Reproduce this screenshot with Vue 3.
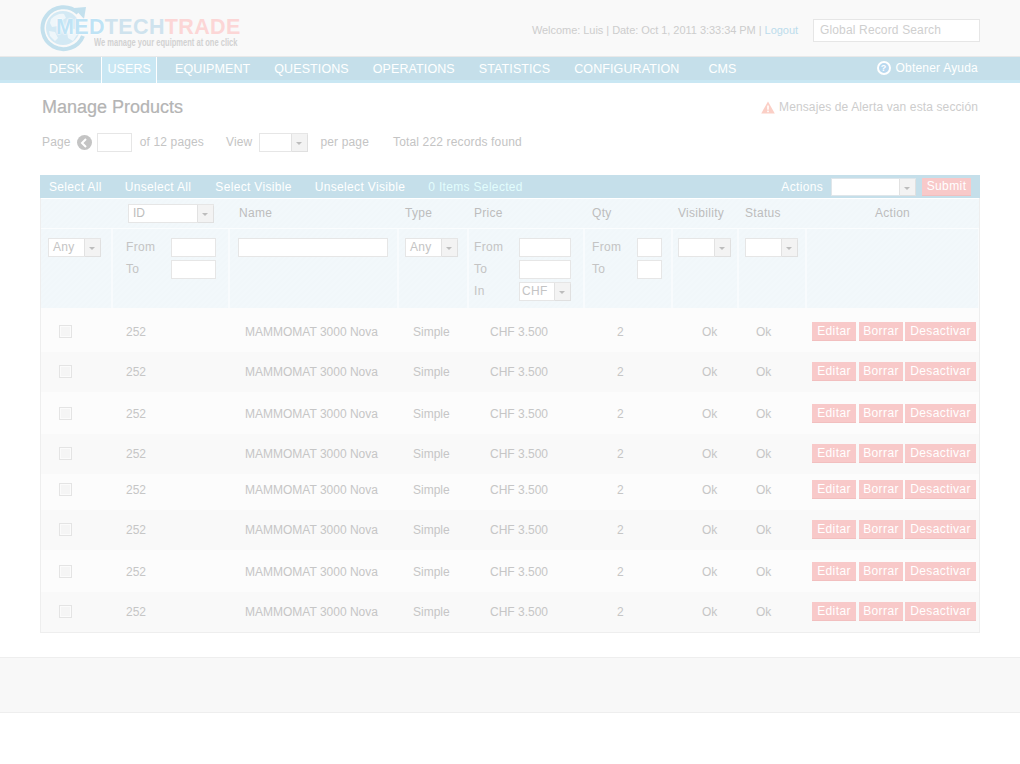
<script setup>
const navItems = ["DESK", "USERS", "EQUIPMENT", "QUESTIONS", "OPERATIONS", "STATISTICS", "CONFIGURATION", "CMS"];
// row heights differ in the original table
const rows = [
  { height: 44, top: 4, bottom: 0 },
  { height: 40, top: 0, bottom: 0 },
  { height: 42, top: 2, bottom: 0 },
  { height: 40, top: 0, bottom: 0 },
  { height: 36, top: 0, bottom: 4 },
  { height: 40, top: 0, bottom: 0 },
  { height: 42, top: 2, bottom: 0 },
  { height: 40, top: 0, bottom: 0 },
];
</script>

<template>
  <div class="page">
    <header class="top">
      <div class="logo">
        <svg class="globe" width="52" height="50" viewBox="0 0 52 50">
          <circle cx="25" cy="25" r="17" fill="#d3e9f4" />
          <path d="M13 16c4-4 9-6 13-5l2 4-5 3-3 5-6 1-2-4zM28 25l9 1 3 4-5 8-5-3-1-6zM11 28l6 1 3 6-3 3-5-5z" fill="#eef6fa" />
          <path d="M40 10A21 21 0 1 0 45 33" fill="none" stroke="#c3e0ed" stroke-width="4" />
          <path d="M36 5l12-1-2 12z" fill="#c3e0ed" />
        </svg>
        <div class="logo-name"><span class="med">MED</span><span class="tech">TECH</span><span class="trade">TRADE</span></div>
        <div class="logo-tag">We manage your equipment at one click</div>
      </div>
      <div class="user-info">Welcome: Luis | Date: Oct 1, 2011 3:33:34 PM | <a>Logout</a></div>
      <input class="global-search" placeholder="Global Record Search" />
    </header>

    <nav class="nav">
      <a v-for="item in navItems" :key="item" :class="{ active: item === 'USERS' }">{{ item }}</a>
      <div class="help">
        <span class="help-icon">?</span>
        Obtener Ayuda
      </div>
    </nav>

    <main class="content">
      <div class="title-row">
        <h1>Manage Products</h1>
        <div class="alert">
          <svg width="14" height="13" viewBox="0 0 14 13">
            <path d="M7 .5 13.800 12.500H.2z" fill="#fbcfc6" />
            <rect x="6.200" y="4.500" width="1.600" height="4.200" fill="#fff" />
            <rect x="6.200" y="9.600" width="1.600" height="1.600" fill="#fff" />
          </svg>
          Mensajes de Alerta van esta sección
        </div>
      </div>

      <div class="pager">
        <span class="label">Page</span>
        <span class="prev">
          <svg width="8" height="10" viewBox="0 0 8 10"><path d="M6 1 2 5l4 4" fill="none" stroke="#fff" stroke-width="2" /></svg>
        </span>
        <span class="box page-box"></span>
        <span class="label of">of 12 pages</span>
        <span class="label view">View</span>
        <span class="select view-select"><i></i></span>
        <span class="label per">per page</span>
        <span class="label total">Total 222 records found</span>
      </div>

      <section class="table">
        <div class="toolbar">
          <a>Select All</a>
          <a class="t2">Unselect All</a>
          <a class="t3">Select Visible</a>
          <a class="t4">Unselect Visible</a>
          <span class="selected">0 Items Selected</span>
          <span class="actions-label">Actions</span>
          <span class="select actions-select"><i></i></span>
          <button class="btn submit">Submit</button>
        </div>

        <div class="grid head">
          <div></div>
          <div class="id-cell"><span class="select id-select">ID<i></i></span></div>
          <div>Name</div>
          <div>Type</div>
          <div>Price</div>
          <div>Qty</div>
          <div>Visibility</div>
          <div>Status</div>
          <div class="center">Action</div>
        </div>

        <div class="grid filters">
          <div><span class="select any">Any<i></i></span></div>
          <div class="pairs pairs-id">
            <label>From</label><span class="box"></span>
            <label>To</label><span class="box"></span>
          </div>
          <div class="name-filter"><span class="box"></span></div>
          <div><span class="select any">Any<i></i></span></div>
          <div class="pairs pairs-price">
            <label>From</label><span class="box"></span>
            <label>To</label><span class="box"></span>
            <label>In</label><span class="select chf">CHF<i></i></span>
          </div>
          <div class="pairs pairs-qty">
            <label>From</label><span class="box"></span>
            <label>To</label><span class="box"></span>
          </div>
          <div><span class="select any"><i></i></span></div>
          <div><span class="select any"><i></i></span></div>
          <div></div>
        </div>

        <div
          v-for="(row, i) in rows"
          :key="i"
          class="grid row"
          :style="{ height: row.height + 'px', paddingTop: row.top + 'px', paddingBottom: row.bottom + 'px' }"
        >
          <div class="check-cell"><span class="check"></span></div>
          <div>252</div>
          <div class="product">MAMMOMAT 3000 Nova</div>
          <div class="simple">Simple</div>
          <div class="price">CHF 3.500</div>
          <div class="qty">2</div>
          <div class="ok1">Ok</div>
          <div class="ok2">Ok</div>
          <div class="row-actions">
            <button class="btn editar">Editar</button>
            <button class="btn borrar">Borrar</button>
            <button class="btn desactivar">Desactivar</button>
          </div>
        </div>
      </section>
    </main>

    <footer class="footer"></footer>
  </div>
</template>

<style scoped>
.page {
  width: 1020px;
  font-family: "Liberation Sans", Arial, sans-serif;
  font-size: 12px;
  color: #c4c4c4;
  background: #fff;
}

.top {
  height: 57px;
  box-sizing: border-box;
  background: #f9f9f9;
  border-bottom: 1px solid #e9e9e9;
  display: flex;
  align-items: center;
  padding-right: 40px;
}

.logo {
  position: relative;
  width: 240px;
  height: 56px;
  flex: none;
}

.globe {
  position: absolute;
  left: 38px;
  top: 3px;
}

.logo-name {
  position: absolute;
  left: 56px;
  top: 17px;
  font-size: 21.500px;
  line-height: 20px;
  font-weight: bold;
  letter-spacing: 0.35px;
  white-space: nowrap;
}

.med {
  color: #bfe3f5;
  text-shadow: 0 0 2px #fff, 0 0 2px #fff;
}
.tech { color: #cfe3ee; }
.trade { color: #fcd6d6; }

.logo-tag {
  position: absolute;
  left: 94px;
  top: 37px;
  font-size: 11px;
  line-height: 10px;
  font-weight: bold;
  color: #d2d2d2;
  white-space: nowrap;
  transform: scaleX(0.685);
  transform-origin: left center;
}

.user-info {
  margin-left: auto;
  margin-right: 15px;
  color: #cdcdcd;
  font-size: 11px;
  letter-spacing: -0.04px;
  margin-top: 4px;
}

.user-info a {
  color: #bcdcec;
}

.global-search {
  width: 167px;
  height: 23px;
  margin-top: 4px;
  box-sizing: border-box;
  border: 1px solid #e6e6e6;
  background: #fff;
  padding: 0 6px;
  font: 12px "Liberation Sans", sans-serif;
  letter-spacing: 0.15px;
  outline: none;
}

.global-search::placeholder {
  color: #cfcfcf;
  opacity: 1;
}

.nav {
  height: 26px;
  box-sizing: border-box;
  background: #c5dfea;
  border-bottom: 3px solid #c9e7f3;
  display: flex;
  align-items: stretch;
  padding-left: 49px;
  padding-right: 42px;
  gap: 24px;
  color: #fff;
  font-size: 12.500px;
  letter-spacing: 0.1px;
}

.nav a {
  display: flex;
  align-items: center;
}

.nav a:nth-child(8) {
  margin-left: 5px;
}

.nav a.active {
  background: #c9e7f3;
  margin: 0 -5px -3px -5px;
  padding: 0 5px 3px;
  box-shadow: -1px 0 #fff, 1px 0 #fff;
}

.help {
  margin-left: auto;
  display: flex;
  align-items: center;
  gap: 5px;
  font-size: 12px;
  letter-spacing: 0.2px;
  margin-top: -1px;
}

.help-icon {
  width: 10px;
  height: 10px;
  border-radius: 50%;
  border: 2px solid #fff;
  background: #b9d9f0;
  font-size: 9px;
  line-height: 10px;
  text-align: center;
  font-weight: bold;
}

.content {
  padding: 0 40px;
}

.title-row {
  height: 48px;
  display: flex;
  align-items: center;
  justify-content: space-between;
  padding-left: 2px;
  padding-right: 2px;
}

h1 {
  margin: 0;
  font-size: 18px;
  font-weight: normal;
  color: #b4b4b4;
  -webkit-text-stroke: 0.2px #b4b4b4;
}

.alert {
  display: flex;
  align-items: center;
  gap: 4px;
  color: #cdcdcd;
  letter-spacing: 0.12px;
}

.pager {
  height: 19px;
  margin-top: 2px;
  margin-left: 2px;
  display: flex;
  align-items: center;
  letter-spacing: 0.15px;
}

.pager .label {
  padding-bottom: 2px;
}

.prev {
  margin-left: 6px;
  width: 15px;
  height: 15px;
  border-radius: 50%;
  background: #c4c4c4;
  display: flex;
  align-items: center;
  justify-content: center;
}

.box {
  display: block;
  box-sizing: border-box;
  height: 19px;
  background: #fff;
  border: 1px solid #e6e6e6;
}

.page-box {
  width: 35px;
  margin-left: 5px;
}

.of { margin-left: 8px; }
.view { margin-left: 22px; }
.view-select { margin-left: 7px; width: 49px; }
.per { margin-left: 12px; }
.total { margin-left: 24px; }

.select {
  display: inline-block;
  position: relative;
  box-sizing: border-box;
  height: 19px;
  line-height: 17px;
  padding-left: 4px;
  background: #fff;
  border: 1px solid #e6e6e6;
}

.select i {
  position: absolute;
  top: 0;
  right: 0;
  width: 16px;
  height: 17px;
  background: #f3f3f3;
  border-left: 1px solid #e2e2e2;
  box-shadow: 1px 1px 0 #e0e0e0;
  box-sizing: border-box;
}

.select i::after {
  content: "";
  position: absolute;
  left: 4px;
  top: 8px;
  border: 3px solid transparent;
  border-top: 3px solid #bdbdbd;
}

.table {
  margin-top: 23px;
  border: 1px solid #eeeeee;
  border-top: 0;
  width: 940px;
  box-sizing: border-box;
}

.toolbar {
  margin: 0 -1px;
  height: 23px;
  background: #c5dfea;
  display: flex;
  align-items: center;
  color: #fff;
  padding-left: 9px;
  letter-spacing: 0.33px;
}

.t2 { margin-left: 23px; }
.t3 { margin-left: 24px; }
.t4 { margin-left: 23px; }

.selected {
  margin-left: 23px;
  color: #e2fdfd;
}

.actions-label { margin-left: auto; }

.actions-select {
  margin-left: 8px;
  width: 85px;
  height: 18px;
  border-color: #dfe6ea;
}

.actions-select i {
  height: 16px;
}

.btn {
  border: 0;
  background: #f8c9c9;
  border-bottom: 1px solid #f2bfbf;
  color: #fff;
  font: 12px "Liberation Sans", sans-serif;
  letter-spacing: 0.4px;
  padding: 0;
  height: 19px;
  text-align: center;
}

.submit {
  margin-left: 6px;
  margin-right: 9px;
  width: 49px;
  height: 18px;
}

.grid {
  display: grid;
  grid-template-columns: 70px 115px 167px 68px 114px 86px 64px 66px 171px;
  column-gap: 2px;
}

.head {
  margin-top: 1px;
  height: 29px;
  align-items: center;
  background: repeating-linear-gradient(135deg, #f1f7fa 0 2px, #f2f8fb 2px 4px);
  border-bottom: 1px solid #fbfdfe;
  color: #bdbdbd;
  letter-spacing: 0.3px;
}

.head > div { padding-bottom: 2px; }
.head > div.id-cell { padding-bottom: 0; }
.head > div:nth-child(3) { padding-left: 9px; }
.head > div:nth-child(4) { padding-left: 6px; }
.head > div:nth-child(5) { padding-left: 5px; }
.head > div:nth-child(6) { padding-left: 7px; }
.head > div:nth-child(7) { padding-left: 5px; }
.head > div:nth-child(8) { padding-left: 6px; }

.center { text-align: center; }

.id-cell { padding-left: 15px; }

.id-select {
  width: 86px;
  vertical-align: middle;
  letter-spacing: 0;
}

.filters {
  height: 79px;
  background: #f8fbfd;
  letter-spacing: 0.3px;
}

.filters > div {
  background: repeating-linear-gradient(135deg, #f1f7fa 0 2px, #f2f8fb 2px 4px);
  padding-top: 9px;
  box-sizing: border-box;
}

.filters > div:nth-child(1) { padding-left: 7px; }
.filters > div:nth-child(3) { padding-left: 8px; }
.filters > div:nth-child(4) { padding-left: 6px; }
.filters > div:nth-child(7) { padding-left: 5px; }
.filters > div:nth-child(8) { padding-left: 6px; }

.any {
  width: 53px;
}

.pairs {
  display: grid;
  row-gap: 3px;
  align-content: start;
  align-items: center;
}

.pairs label { padding-bottom: 2px; }

.pairs-id { grid-template-columns: 45px 45px; padding-left: 13px; }
.pairs-price { grid-template-columns: 45px 52px; padding-left: 5px; }
.pairs-qty { grid-template-columns: 45px 25px; padding-left: 7px; }

.name-filter .box { width: 150px; }

.chf { padding-left: 2px; }

.row {
  box-sizing: border-box;
  align-items: center;
  background: #fcfcfc;
  color: #c6c6c6;
}

.row:nth-child(odd) {
  background: #f9f9f9;
}

.row > div { white-space: nowrap; }
.row > div:nth-child(2) { padding-left: 13px; }
.product { padding-left: 15px; }
.simple { padding-left: 14px; }
.price { padding-left: 21px; }
.qty { padding-left: 32px; }
.ok1 { padding-left: 29px; }
.ok2 { padding-left: 17px; }

.check-cell {
  display: flex;
  padding-left: 18px;
  margin-bottom: 1px;
}

.check {
  width: 13px;
  height: 13px;
  box-sizing: border-box;
  border: 1px solid #e4e4e4;
  background: #f5f5f5;
  box-shadow: inset 0 0 0 1px #fbfbfb;
}

.row-actions {
  display: flex;
  gap: 3px;
  padding-left: 5px;
  margin-bottom: 1px;
}

.editar { width: 44px; }
.borrar { width: 44px; margin-right: -1px; }
.desactivar { width: 71px; }

.footer {
  margin-top: 24px;
  height: 56px;
  box-sizing: border-box;
  background: #f8f8f8;
  border-top: 1px solid #eeeeee;
  border-bottom: 1px solid #eeeeee;
}
</style>

<style>
html, body {
  background: #fff;
}
</style>
